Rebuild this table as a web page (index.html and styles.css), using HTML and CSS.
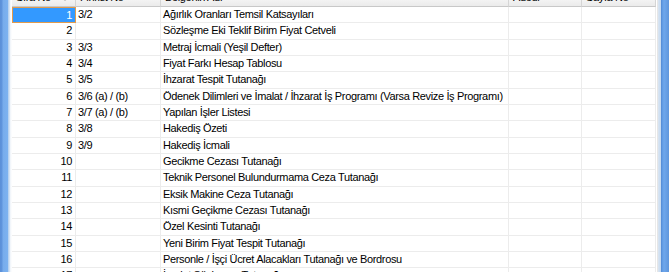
FILE: index.html
```html
<!DOCTYPE html>
<html lang="tr">
<head>
<meta charset="utf-8">
<title>Hakediş Belgeleri</title>
<link rel="stylesheet" href="styles.css">
</head>
<body>
<div class="window">
  <div class="frame-left"></div>
  <div class="inner-left"></div>
  <div class="grid-wrap">
    <div class="grid">
      <div class="hcell">Sıra No<span class="sort"></span></div>
      <div class="hcell">Fihrist No</div>
      <div class="hcell">Belgenin Adı</div>
      <div class="hcell">Adedi</div>
      <div class="hcell">Sayfa No</div>

      <div class="cell num selected">1</div><div class="cell">3/2</div><div class="cell">Ağırlık Oranları Temsil Katsayıları</div><div class="cell"></div><div class="cell"></div>
      <div class="cell num">2</div><div class="cell"></div><div class="cell">Sözleşme Eki Teklif Birim Fiyat Cetveli</div><div class="cell"></div><div class="cell"></div>
      <div class="cell num">3</div><div class="cell">3/3</div><div class="cell">Metraj İcmali (Yeşil Defter)</div><div class="cell"></div><div class="cell"></div>
      <div class="cell num">4</div><div class="cell">3/4</div><div class="cell">Fiyat Farkı Hesap Tablosu</div><div class="cell"></div><div class="cell"></div>
      <div class="cell num">5</div><div class="cell">3/5</div><div class="cell">İhzarat Tespit Tutanağı</div><div class="cell"></div><div class="cell"></div>
      <div class="cell num">6</div><div class="cell">3/6 (a) / (b)</div><div class="cell">Ödenek Dilimleri ve İmalat / İhzarat İş Programı (Varsa Revize İş Programı)</div><div class="cell"></div><div class="cell"></div>
      <div class="cell num">7</div><div class="cell">3/7 (a) / (b)</div><div class="cell">Yapılan İşler Listesi</div><div class="cell"></div><div class="cell"></div>
      <div class="cell num">8</div><div class="cell">3/8</div><div class="cell">Hakediş Özeti</div><div class="cell"></div><div class="cell"></div>
      <div class="cell num">9</div><div class="cell">3/9</div><div class="cell">Hakediş İcmali</div><div class="cell"></div><div class="cell"></div>
      <div class="cell num">10</div><div class="cell"></div><div class="cell">Gecikme Cezası Tutanağı</div><div class="cell"></div><div class="cell"></div>
      <div class="cell num">11</div><div class="cell"></div><div class="cell">Teknik Personel Bulundurmama Ceza Tutanağı</div><div class="cell"></div><div class="cell"></div>
      <div class="cell num">12</div><div class="cell"></div><div class="cell">Eksik Makine Ceza Tutanağı</div><div class="cell"></div><div class="cell"></div>
      <div class="cell num">13</div><div class="cell"></div><div class="cell">Kısmi Geçikme Cezası Tutanağı</div><div class="cell"></div><div class="cell"></div>
      <div class="cell num">14</div><div class="cell"></div><div class="cell">Özel Kesinti Tutanağı</div><div class="cell"></div><div class="cell"></div>
      <div class="cell num">15</div><div class="cell"></div><div class="cell">Yeni Birim Fiyat Tespit Tutanağı</div><div class="cell"></div><div class="cell"></div>
      <div class="cell num">16</div><div class="cell"></div><div class="cell">Personle / İşçi Ücret Alacakları Tutanağı ve Bordrosu</div><div class="cell"></div><div class="cell"></div>
      <div class="cell num">17</div><div class="cell"></div><div class="cell">İmalat Sözleşme Tutanağı</div><div class="cell"></div><div class="cell"></div>
    </div>
  </div>
  <div class="inner-right"></div>
  <div class="frame-right"></div>
</div>
</body>
</html>
```
FILE: styles.css
```css
html, body {
  margin: 0;
  padding: 0;
  background: #ffffff;
  overflow: hidden;
}
.window {
  display: flex;
  width: 669px;
  height: 272px;
  overflow: hidden;
  font-family: "Liberation Sans", Arial, sans-serif;
  font-size: 11px;
  letter-spacing: -0.35px;
  color: #000;
}
.frame-left {
  width: 8px;
  flex: none;
  background: linear-gradient(to right, #5a8fd8 0, #5f95dd 2px, #77acec 3px, #7cb2f0 8px);
}
.inner-left {
  width: 4px;
  flex: none;
  background: linear-gradient(to right, #b9d3f0 0, #b9d3f0 1px, #eef3f9 2px, #ffffff 4px);
}
.grid-wrap {
  width: 645px;
  flex: none;
  overflow: hidden;
}
.grid {
  display: grid;
  grid-template-columns: 64px 85px 348px 73px 74px;
  grid-auto-rows: 16.33px;
  grid-template-rows: 18px;
  margin-top: -11px;
}
.hcell {
  background: linear-gradient(to bottom, #ffffff 0, #f4f4f4 60%, #ebebeb 100%);
  border-right: 1px solid #d5d5d5;
  border-bottom: 1px solid #c8c8c8;
  padding: 2px 0 0 4px;
  position: relative;
  white-space: nowrap;
  overflow: hidden;
}
.sort {
  position: absolute;
  right: 6px;
  top: 9px;
  width: 0;
  height: 0;
  border-left: 4px solid transparent;
  border-right: 4px solid transparent;
  border-top: 3px solid #b5b5b5;
}
.cell {
  border-right: 1px solid #ececec;
  border-bottom: 1px solid #ececec;
  padding: 0 0 0 2px;
  line-height: 15px;
  white-space: nowrap;
  overflow: hidden;
}
.cell.num {
  text-align: right;
  padding: 0 3px 0 0;
}
.cell.selected {
  background: #3399ff;
  color: #ffffff;
  border: 1px solid #e29b4c;
  line-height: 14px;
}
.inner-right {
  width: 4px;
  flex: none;
  background: linear-gradient(to right, #e6e6e6 0, #e6e6e6 1px, #dbe6f2 1px, #c3d8ef 4px);
}
.frame-right {
  width: 8px;
  flex: none;
  background: linear-gradient(to right, #4e86d2 0, #5e98e0 1px, #6ea7ec 3px, #5f96dc 8px);
}
```
